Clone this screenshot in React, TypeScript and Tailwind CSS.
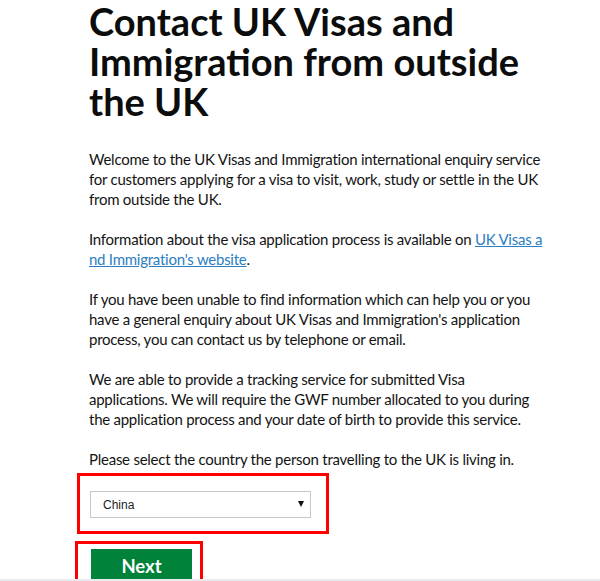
import React from "react";

export default function App() {
  return (
    <div className="relative w-[600px] h-[581px] overflow-hidden bg-white">
      <div className="pl-[89px] pr-[20px] text-[#0b0c0c]">
        <h1
          className="text-[38px] leading-[40px] font-bold text-[#0b0c0c] pt-[1px]"
          style={{ fontFamily: 'Lato, Arial, sans-serif' }}
        >
          Contact UK Visas and
          <br />
          Immigration from outside
          <br />
          the UK
        </h1>
        <div
          className="mt-[28px] text-[15px] leading-[20px] tracking-[-0.25px] text-[#141414] whitespace-nowrap"
          style={{ fontFamily: 'Lato, Arial, sans-serif' }}
        >
          <p>
            Welcome to the UK Visas and Immigration international enquiry service
            <br />
            for customers applying for a visa to visit, work, study or settle in the UK
            <br />
            from outside the UK.
          </p>
          <p className="mt-[20px]">
            Information about the visa application process is available on{" "}
            <a href="#" className="text-[#2b7ec1] underline">
              UK Visas a
              <br />
              nd Immigration's website
            </a>
            .
          </p>
          <p className="mt-[20px]">
            If you have been unable to find information which can help you or you
            <br />
            have a general enquiry about UK Visas and Immigration's application
            <br />
            process, you can contact us by telephone or email.
          </p>
          <p className="mt-[20px]">
            We are able to provide a tracking service for submitted Visa
            <br />
            applications. We will require the GWF number allocated to you during
            <br />
            the application process and your date of birth to provide this service.
          </p>
          <p className="mt-[20px]">Please select the country the person travelling to the UK is living in.</p>
        </div>
      </div>
      <div className="ml-[77px] mt-[4px] w-[252px] h-[61px] border-[3px] border-[#ff0000] pl-[10px] pt-[15px]">
        <div
          className="relative w-[221px] h-[27px] border border-[#c8c8c8] bg-white flex items-center pl-[12px] text-[12px] text-[#222]"
          style={{ fontFamily: 'Arial, "Liberation Sans", sans-serif' }}
        >
          China
          <span className="absolute right-[6px] top-[9px] w-0 h-0 border-l-[3.5px] border-r-[3.5px] border-t-[6px] border-l-transparent border-r-transparent border-t-[#111]" />
        </div>
      </div>
      <div className="ml-[75px] mt-[7px] w-[128px] h-[42px] border-[3px] border-[#ff0000] pl-[13px] pt-[5px]">
        <div
          className="w-[101px] h-[40px] bg-[#00823b] text-white font-bold text-[18.5px] leading-[22px] text-center pt-[6px]"
          style={{ fontFamily: 'Lato, Arial, sans-serif' }}
        >
          Next
        </div>
      </div>
      <div className="absolute left-0 right-0 top-[579px] h-[2px] bg-[#e8ebee]" />
    </div>
  );
}
